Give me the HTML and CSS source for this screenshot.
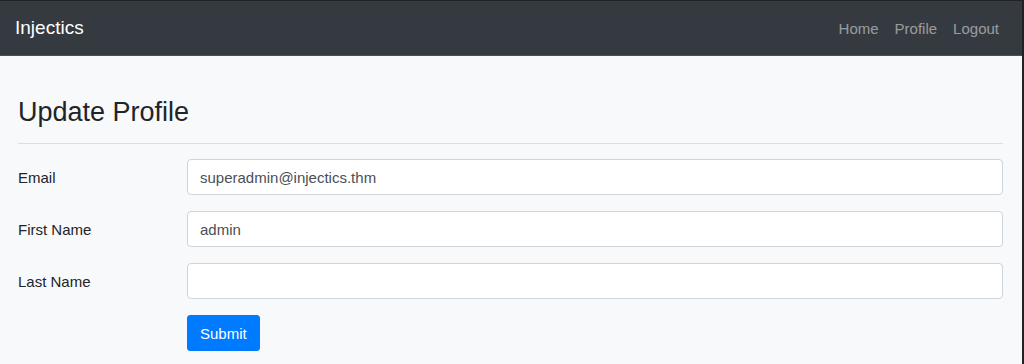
FILE: index.html
```html
<!DOCTYPE html>
<html lang="en">
<head>
    <meta charset="UTF-8">
    <meta name="viewport" content="width=device-width, initial-scale=1.0">
    <title>Injectics - Update Profile</title>
    <link rel="stylesheet" href="styles.css">
</head>
<body>
    <div class="frame">
        <nav class="navbar">
            <a class="brand" href="#">Injectics</a>
            <div class="nav-links">
                <a href="#">Home</a>
                <a href="#">Profile</a>
                <a href="#">Logout</a>
            </div>
        </nav>

        <div class="content">
            <h3 class="page-title">Update Profile</h3>
            <hr>

            <form class="profile-form">
                <div class="form-row">
                    <label for="email">Email</label>
                    <input type="text" id="email" class="form-control" value="superadmin@injectics.thm">
                </div>
                <div class="form-row">
                    <label for="fname">First Name</label>
                    <input type="text" id="fname" class="form-control" value="admin">
                </div>
                <div class="form-row">
                    <label for="lname">Last Name</label>
                    <input type="text" id="lname" class="form-control" value="">
                </div>
                <div class="form-row">
                    <span></span>
                    <div><button type="button" class="btn-submit">Submit</button></div>
                </div>
            </form>
        </div>
    </div>
</body>
</html>
```

FILE: styles.css
```css
* {
    box-sizing: border-box;
}

html, body {
    margin: 0;
    padding: 0;
    height: 100%;
}

body {
    font-family: "Liberation Sans", Arial, sans-serif;
    font-size: 15px;
    color: #212529;
    background: #f8f9fa;
    overflow: hidden;
}

.frame {
    min-height: 100%;
    border-top: 1px solid #1f2226;
    border-right: 2px solid #1f2226;
    background: #f8f9fa;
}

.navbar {
    display: flex;
    justify-content: space-between;
    align-items: center;
    height: 55px;
    padding: 0 15px;
    background: #343a40;
    border-bottom: 1px solid #4a5056;
}

.brand {
    color: #fff;
    font-size: 19px;
    text-decoration: none;
    margin-top: -1px;
}

.nav-links {
    display: flex;
}

.nav-links a {
    color: rgba(255, 255, 255, 0.5);
    text-decoration: none;
    padding: 0 8px;
    font-size: 15px;
}

.content {
    padding: 0 19px 0 18px;
}

.page-title {
    font-size: 27px;
    font-weight: 400;
    line-height: 1.2;
    margin: 40px 0 0 0;
}

hr {
    border: 0;
    border-top: 1px solid #dcdfe2;
    margin: 15px 0 15px 0;
}

.form-row {
    display: grid;
    grid-template-columns: 169px 1fr;
    align-items: center;
    margin-bottom: 16px;
}

.form-row label {
    font-size: 15px;
}

.form-control {
    width: 100%;
    height: 36px;
    padding: 0 12px;
    font-family: inherit;
    font-size: 15px;
    color: #495057;
    background: #fff;
    border: 1px solid #ced4da;
    border-radius: 4px;
}

.btn-submit {
    height: 36px;
    padding: 0 12px;
    font-family: inherit;
    font-size: 15px;
    color: #fff;
    background: #007bff;
    border: 1px solid #007bff;
    border-radius: 3px;
    cursor: pointer;
}
```
